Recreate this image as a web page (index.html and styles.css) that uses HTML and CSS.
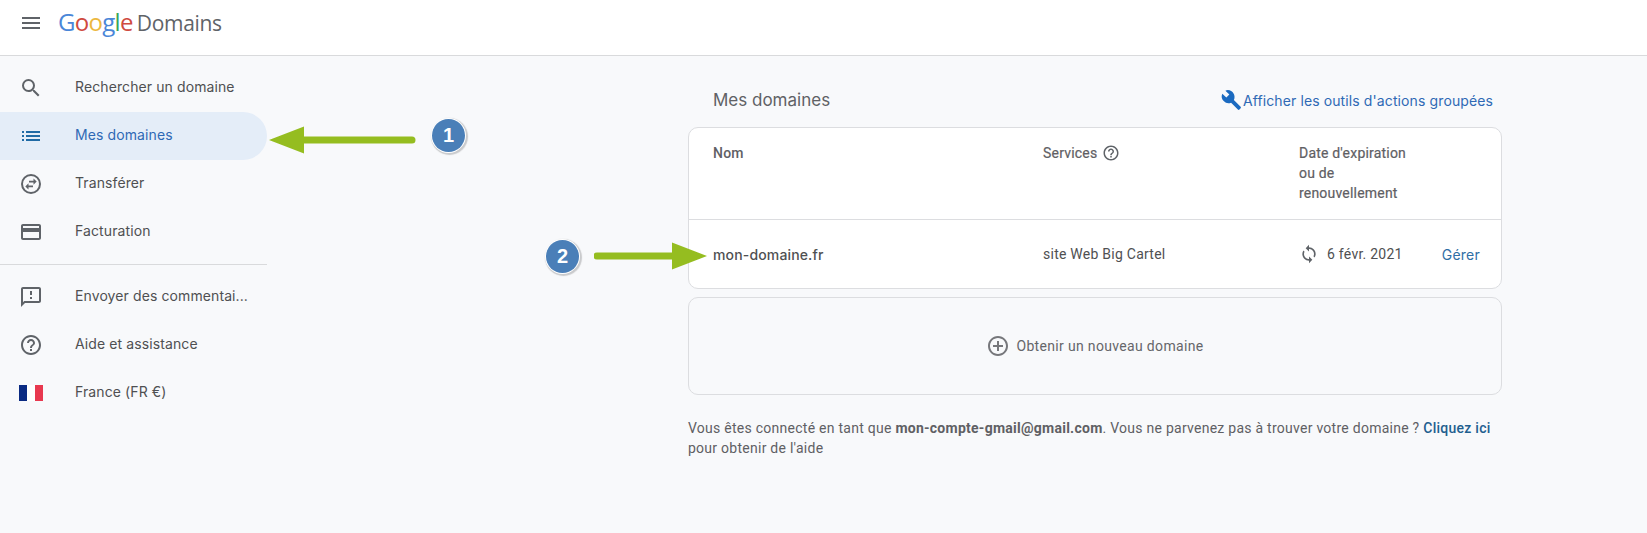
FILE: index.html
```html
<!DOCTYPE html>
<html lang="fr">
<head>
    <meta charset="UTF-8">
    <title>Google Domains</title>
    <link rel="stylesheet" href="styles.css">
</head>
<body>
    <header class="topbar">
        <svg class="menu-icon" viewBox="0 0 24 24"><path d="M3 18h18v-2H3v2zm0-5h18v-2H3v2zm0-7v2h18V6H3z"/></svg>
        <div class="logo">
            <span class="logo-g"><span class="blue">G</span><span class="red">o</span><span class="yellow">o</span><span class="blue">g</span><span class="green">l</span><span class="red">e</span></span>
            <span class="logo-name">Domains</span>
        </div>
    </header>

    <div class="layout">
        <nav class="sidebar">
            <a class="nav-item">
                <svg class="nav-icon" viewBox="0 0 24 24"><path d="M15.5 14h-.79l-.28-.27A6.47 6.47 0 0 0 16 9.5 6.5 6.5 0 1 0 9.5 16c1.61 0 3.09-.59 4.23-1.57l.27.28v.79l5 4.99L20.49 19l-4.99-5zm-6 0C7.01 14 5 11.99 5 9.5S7.01 5 9.5 5 14 7.01 14 9.5 11.99 14 9.5 14z"/></svg>
                <span>Rechercher un domaine</span>
            </a>
            <a class="nav-item active">
                <svg class="nav-icon" viewBox="0 0 24 24"><path d="M3 13h2v-2H3v2zm0 4h2v-2H3v2zm0-8h2V7H3v2zm4 4h14v-2H7v2zm0 4h14v-2H7v2zM7 7v2h14V7H7z"/></svg>
                <span>Mes domaines</span>
            </a>
            <a class="nav-item">
                <svg class="nav-icon" viewBox="0 0 24 24"><path d="M12 2a10 10 0 1 0 0 20 10 10 0 0 0 0-20zm0 18a8 8 0 1 1 0-16 8 8 0 0 1 0 16z"/><path d="M14.5 6.5v2.2H10v1.8h4.5v2.2l3.2-3.1zM9.5 17.5v-2.2H14v-1.8H9.5v-2.2l-3.2 3.1z"/></svg>
                <span>Transférer</span>
            </a>
            <a class="nav-item">
                <svg class="nav-icon" viewBox="0 0 24 24"><path d="M20 4H4c-1.11 0-1.99.89-1.99 2L2 18c0 1.11.89 2 2 2h16c1.11 0 2-.89 2-2V6c0-1.11-.89-2-2-2zm0 14H4v-6h16v6zm0-10H4V6h16v2z"/></svg>
                <span>Facturation</span>
            </a>
            <div class="nav-divider"></div>
            <a class="nav-item">
                <svg class="nav-icon" viewBox="0 0 24 24"><path d="M20 2H4c-1.1 0-1.99.9-1.99 2L2 22l4-4h14c1.1 0 2-.9 2-2V4c0-1.1-.9-2-2-2zm0 14H5.17L4 17.17V4h16v12zM11 12h2v2h-2zm0-6h2v4h-2z"/></svg>
                <span>Envoyer des commentai...</span>
            </a>
            <a class="nav-item">
                <svg class="nav-icon" viewBox="0 0 24 24"><path d="M11 18h2v-2h-2v2zm1-16C6.48 2 2 6.48 2 12s4.48 10 10 10 10-4.48 10-10S17.52 2 12 2zm0 18c-4.41 0-8-3.59-8-8s3.59-8 8-8 8 3.59 8 8-3.59 8-8 8zm0-14c-2.21 0-4 1.79-4 4h2c0-1.1.9-2 2-2s2 .9 2 2c0 2-3 1.75-3 5h2c0-2.25 3-2.5 3-5 0-2.21-1.79-4-4-4z"/></svg>
                <span>Aide et assistance</span>
            </a>
            <a class="nav-item">
                <span class="flag"><i class="flag-blue"></i><i class="flag-white"></i><i class="flag-red"></i></span>
                <span>France (FR €)</span>
            </a>
        </nav>

        <main class="content">
            <div class="title-row">
                <h1>Mes domaines</h1>
                <a class="bulk-link">
                    <svg class="wrench" viewBox="0 0 24 24"><path d="M8.6 1.2a7.6 7.6 0 0 0-2.7.6l4.3 4.3-3.3 3.3-4.4-4.3a7.5 7.5 0 0 0 9.6 9.9l7.4 7.4c.5.5 1.2.5 1.7 0l1.3-1.3c.5-.5.5-1.2 0-1.7l-7.4-7.4A7.5 7.5 0 0 0 8.6 1.2z"/></svg>
                    <span>Afficher les outils d'actions groupées</span>
                </a>
            </div>

            <section class="card">
                <div class="row row-head">
                    <div>Nom</div>
                    <div class="services">Services
                        <svg class="help-icon" viewBox="0 0 24 24"><path d="M11 18h2v-2h-2v2zm1-16C6.48 2 2 6.48 2 12s4.48 10 10 10 10-4.48 10-10S17.52 2 12 2zm0 18c-4.41 0-8-3.59-8-8s3.59-8 8-8 8 3.59 8 8-3.59 8-8 8zm0-14c-2.21 0-4 1.79-4 4h2c0-1.1.9-2 2-2s2 .9 2 2c0 2-3 1.75-3 5h2c0-2.25 3-2.5 3-5 0-2.21-1.79-4-4-4z"/></svg>
                    </div>
                    <div class="expiry-head">Date d'expiration ou de renouvellement</div>
                </div>
                <div class="row row-domain">
                    <div class="domain-name">mon-domaine.fr</div>
                    <div>site Web Big Cartel</div>
                    <div class="expiry">
                        <svg class="renew-icon" viewBox="0 0 24 24"><path d="M12 4V1L8 5l4 4V6c3.31 0 6 2.69 6 6 0 1.01-.25 1.97-.7 2.8l1.46 1.46A7.93 7.93 0 0 0 20 12c0-4.42-3.58-8-8-8zm0 14c-3.31 0-6-2.69-6-6 0-1.01.25-1.97.7-2.8L5.24 7.74A7.93 7.93 0 0 0 4 12c0 4.42 3.58 8 8 8v3l4-4-4-4v3z"/></svg>
                        <span class="expiry-date">6 févr. 2021</span>
                        <a class="manage">Gérer</a>
                    </div>
                </div>
            </section>

            <section class="card-new">
                <svg class="plus-icon" viewBox="0 0 24 24"><path d="M13 7h-2v4H7v2h4v4h2v-4h4v-2h-4V7zm-1-5C6.48 2 2 6.48 2 12s4.48 10 10 10 10-4.48 10-10S17.52 2 12 2zm0 18c-4.41 0-8-3.59-8-8s3.59-8 8-8 8 3.59 8 8-3.59 8-8 8z"/></svg>
                <span>Obtenir un nouveau domaine</span>
            </section>

            <p class="help-text">Vous êtes connecté en tant que <b>mon-compte-gmail@gmail.com</b>. Vous ne parvenez pas à trouver votre domaine ? <a>Cliquez ici</a> pour obtenir de l'aide</p>
        </main>
    </div>

    <!-- annotations added on top of the screenshot -->
    <svg class="arrow arrow-one" viewBox="0 0 150 30"><path d="M0 15 L35 1.5 V11.5 H143 a3.500 3.500 0 0 1 0 7 H35 V28.5 Z"/></svg>
    <div class="badge badge-one">1</div>
    <svg class="arrow arrow-two" viewBox="0 0 114 30"><path d="M113 15 L78 1.5 V11.500 H3 a3.500 3.500 0 0 0 0 7 H78 V28.5 Z"/></svg>
    <div class="badge badge-two">2</div>
</body>
</html>
```

FILE: styles.css
```css
* {
    box-sizing: border-box;
}
html, body {
    height: 100%;
}
body {
    margin: 0;
    background: #f8f9fb;
    color: #4f5052;
    font-family: Roboto, "Liberation Sans", sans-serif;
    font-size: 14px;
    overflow: hidden;
    position: relative;
}

/* top bar */
.topbar {
    height: 56px;
    background: #fff;
    border-bottom: 1px solid #d9dadc;
    display: flex;
    align-items: flex-start;
    padding: 11px 0 0 19px;
}
.menu-icon {
    width: 24px;
    height: 24px;
    fill: #5f6368;
}
.logo {
    margin-left: 15px;
    margin-top: -4px;
    display: flex;
    align-items: baseline;
    gap: 4px;
    font-family: "Open Sans", sans-serif;
    line-height: 30px;
}
.logo-g {
    font-size: 24px;
    letter-spacing: -0.7px;
    font-weight: 500;
}
.logo-name {
    font-size: 21px;
    letter-spacing: -0.3px;
    color: #5f6368;
}
.blue { color: #4a86d8; }
.red { color: #cf4a40; }
.yellow { color: #ecb83f; }
.green { color: #3aa757; }

/* side nav */
.layout {
    display: flex;
}
.sidebar {
    width: 267px;
    padding-top: 8px;
    flex-shrink: 0;
}
.nav-item {
    height: 48px;
    display: flex;
    align-items: center;
    padding-left: 19px;
    gap: 32px;
    font-family: Inter, sans-serif;
    font-size: 14px;
    letter-spacing: 0.1px;
    color: #4f5052;
}
.nav-item span:last-child {
    margin-bottom: 4px;
}
.nav-item.active {
    background: #e4edf8;
    border-radius: 0 24px 24px 0;
    color: #2f69b5;
}
.nav-item.active .nav-icon {
    fill: #1f6aa5;
}
.nav-icon {
    width: 24px;
    height: 24px;
    fill: #5f6368;
    flex-shrink: 0;
}
.nav-divider {
    height: 1px;
    background: #d9dadc;
    margin: 8px 0;
}
.flag {
    width: 24px;
    height: 16px;
    display: flex;
    flex-shrink: 0;
}
.flag i {
    flex: 1;
}
.flag-blue { background: #0a2a82; }
.flag-white { background: #fff; }
.flag-red { background: #e8384f; }

/* main column */
.content {
    width: 814px;
    margin-left: 421px;
}
.title-row {
    height: 71px;
    display: flex;
    align-items: center;
    justify-content: space-between;
    padding: 17px 9px 0 25px;
}
h1 {
    margin: 0;
    font-family: Inter, sans-serif;
    font-size: 17px;
    font-weight: 400;
    color: #606165;
}
.bulk-link {
    display: flex;
    align-items: center;
    gap: 1px;
    font-family: Inter, sans-serif;
    font-size: 14px;
    letter-spacing: 0.11px;
    color: #2f69b5;
}
.wrench {
    width: 22px;
    height: 22px;
    fill: #1b6ac0;
}

.card {
    height: 162px;
    background: #fff;
    border: 1px solid #dcdde0;
    border-radius: 10px;
}
.row {
    display: grid;
    grid-template-columns: 330px 256px 1fr;
    padding-left: 24px;
}
.row-head {
    height: 92px;
    padding-top: 15px;
    border-bottom: 1px solid #dcdde0;
    line-height: 20px;
    font-weight: 500;
    color: #5f6064;
    letter-spacing: 0.2px;
}
.services {
    display: flex;
    align-items: flex-start;
    gap: 5px;
    font-weight: 400;
    -webkit-text-stroke: 0.2px #5f6064;
}
.help-icon {
    width: 18px;
    height: 18px;
    margin-top: 1px;
    fill: #5f6368;
}
.expiry-head {
    width: 120px;
    font-weight: 400;
    -webkit-text-stroke: 0.2px #5f6064;
}
.row-domain {
    height: 68px;
    align-items: center;
    letter-spacing: 0.25px;
    color: #4f5052;
}
.domain-name {
    font-family: Inter, sans-serif;
    font-weight: 500;
    letter-spacing: 0.15px;
}
.expiry {
    display: flex;
    align-items: center;
}
.renew-icon {
    width: 20px;
    height: 20px;
    fill: #5f6368;
    flex-shrink: 0;
}
.expiry-date {
    margin-left: 8px;
}
.manage {
    margin-left: 39px;
    font-family: Inter, sans-serif;
    color: #2f6ea5;
}

.card-new {
    height: 98px;
    margin-top: 8px;
    border: 1px solid #dcdde0;
    border-radius: 10px;
    display: flex;
    align-items: center;
    justify-content: center;
    gap: 6px;
    letter-spacing: 0.33px;
    color: #65666a;
}
.plus-icon {
    width: 24px;
    height: 24px;
    fill: #76777b;
}

.help-text {
    margin: 23px 0 0;
    line-height: 20px;
    letter-spacing: 0.26px;
    color: #5f6064;
}
.help-text b {
    font-weight: 700;
}
.help-text a {
    color: #1f5f8f;
    font-weight: 500;
}

/* annotations */
.arrow {
    position: absolute;
    fill: #95bd20;
}
.arrow-one {
    left: 269px;
    top: 125px;
    width: 150px;
    height: 30px;
}
.arrow-two {
    left: 594px;
    top: 241px;
    width: 114px;
    height: 30px;
}
.badge {
    position: absolute;
    width: 33px;
    height: 33px;
    border-radius: 50%;
    background: #4a7fb8;
    color: #fff;
    font-family: "Liberation Sans", sans-serif;
    font-weight: 700;
    font-size: 20px;
    line-height: 33px;
    text-align: center;
    box-shadow: 0 0 0 1px #fff, 1px 1px 1px 2px #c9cacc;
}
.badge-one {
    left: 432px;
    top: 119px;
}
.badge-two {
    left: 546px;
    top: 240px;
}
```
